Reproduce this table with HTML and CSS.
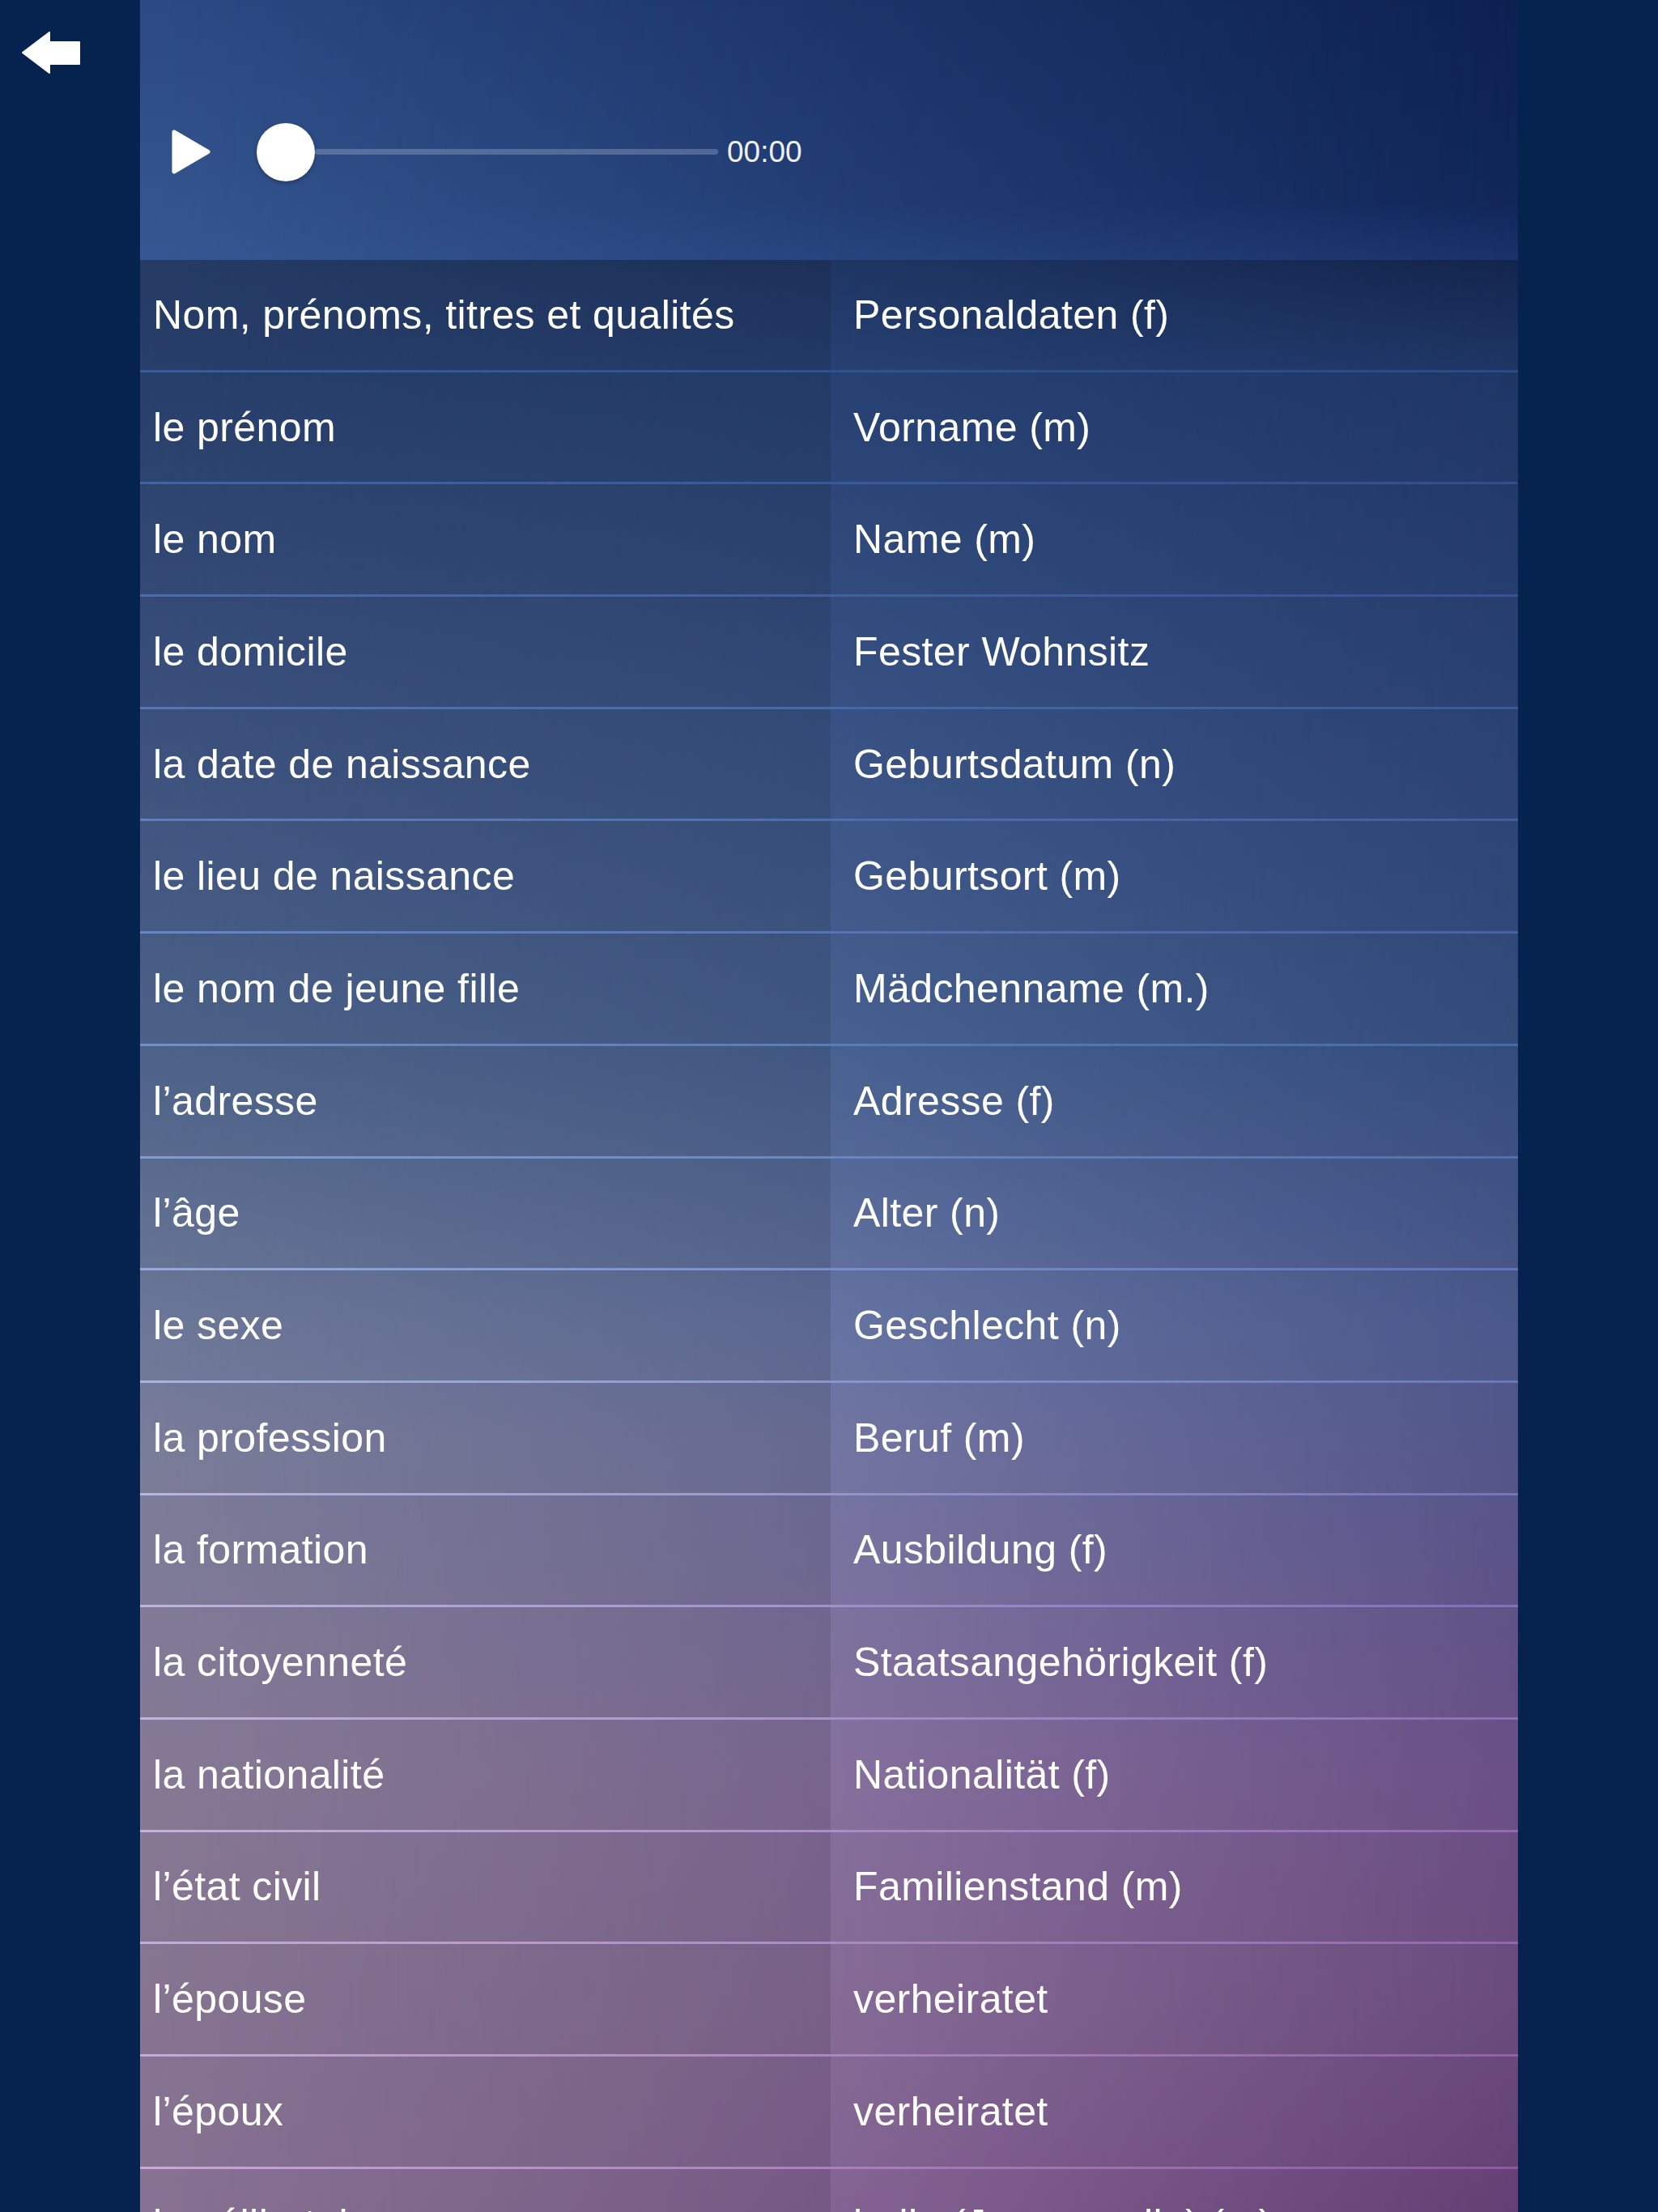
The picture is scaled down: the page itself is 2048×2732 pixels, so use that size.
FILE: index.html
```html
<!DOCTYPE html>
<html lang="fr">
<head>
<meta charset="utf-8">
<title>Vocabulaire</title>
<link rel="stylesheet" href="styles.css">
</head>
<body>
<div class="page">
  <aside class="gutter gutter-left">
    <button class="back" aria-label="Retour">
      <svg width="72" height="52" viewBox="0 0 72 52"><path d="M1 26 L34 1 L34 13 L71 13 L71 40 L34 40 L34 51 Z" fill="#fff" stroke="#fff" stroke-width="2" stroke-linejoin="round"/></svg>
    </button>
  </aside>
  <main class="panel">
    <div class="panel-content">
      <div class="player">
        <svg class="play" width="48" height="55" viewBox="0 0 48 55"><path d="M3 3 L45 27.5 L3 52 Z" fill="#fff" stroke="#fff" stroke-width="5" stroke-linejoin="round"/></svg>
        <div class="slider">
          <div class="knob"></div>
          <div class="track"></div>
        </div>
        <span class="time">00:00</span>
      </div>
      <div class="table">
        <div class="cell l">Nom, prénoms, titres et qualités</div><div class="cell r">Personaldaten (f)</div>
        <div class="cell l">le prénom</div><div class="cell r">Vorname (m)</div>
        <div class="cell l">le nom</div><div class="cell r">Name (m)</div>
        <div class="cell l">le domicile</div><div class="cell r">Fester Wohnsitz</div>
        <div class="cell l">la date de naissance</div><div class="cell r">Geburtsdatum (n)</div>
        <div class="cell l">le lieu de naissance</div><div class="cell r">Geburtsort (m)</div>
        <div class="cell l">le nom de jeune fille</div><div class="cell r">Mädchenname (m.)</div>
        <div class="cell l">l’adresse</div><div class="cell r">Adresse (f)</div>
        <div class="cell l">l’âge</div><div class="cell r">Alter (n)</div>
        <div class="cell l">le sexe</div><div class="cell r">Geschlecht (n)</div>
        <div class="cell l">la profession</div><div class="cell r">Beruf (m)</div>
        <div class="cell l">la formation</div><div class="cell r">Ausbildung (f)</div>
        <div class="cell l">la citoyenneté</div><div class="cell r">Staatsangehörigkeit (f)</div>
        <div class="cell l">la nationalité</div><div class="cell r">Nationalität (f)</div>
        <div class="cell l">l’état civil</div><div class="cell r">Familienstand (m)</div>
        <div class="cell l">l’épouse</div><div class="cell r">verheiratet</div>
        <div class="cell l">l’époux</div><div class="cell r">verheiratet</div>
        <div class="cell l">le célibataire</div><div class="cell r">ledig (Junggeselle) (m)</div>
      </div>
    </div>
  </main>
  <aside class="gutter gutter-right"></aside>
</div>
</body>
</html>
```

FILE: styles.css
```css
html, body {
  margin: 0;
  padding: 0;
}
body {
  background: #062350;
  font-family: "Liberation Sans", Arial, sans-serif;
  color: #fff;
  height: 2732px;
  overflow: hidden;
}
.page {
  display: flex;
  height: 2732px;
}
.gutter {
  width: 173px;
  flex: 0 0 173px;
  background: #062350;
}
.gutter-left {
  padding: 39px 0 0 27px;
  box-sizing: border-box;
}
.back {
  display: block;
  background: none;
  border: 0;
  padding: 0;
  margin: 0;
  width: 72px;
  height: 52px;
}
.back svg { display: block; }

.panel {
  flex: 0 0 1702px;
  width: 1702px;
  height: 2732px;
  overflow: hidden;
  position: relative;
  background: linear-gradient(to bottom,
    #2c4a84 0px, #34558f 250px, #3a5c9c 460px, #5878b8 900px,
    #7090c8 1290px, #a0b0e0 1640px, #b3b8e2 1780px, #c6b3db 2190px,
    #c6acd6 2470px, #c8a8d8 2732px);
}
.panel::before {
  content: "";
  position: absolute;
  inset: 0;
  background: linear-gradient(to bottom,
    #0c2150 0px, #112659 250px, #2a4a8a 460px, #3a5a9c 900px,
    #4668a8 1290px, #6578bd 1640px, #7a72ba 1900px, #916cb6 2190px,
    #9166aa 2470px, #88569f 2732px);
  -webkit-mask-image: linear-gradient(to right, transparent 0%, #000 100%);
  mask-image: linear-gradient(to right, transparent 0%, #000 100%);
}
.panel-content {
  position: relative;
}

.player {
  height: 321px;
  box-sizing: border-box;
  padding: 54px 0 0 39px;
  display: flex;
  align-items: center;
}
.play { display: block; flex: 0 0 auto; }
.slider {
  margin-left: 57px;
  display: flex;
  align-items: center;
}
.knob {
  width: 72px;
  height: 72px;
  border-radius: 50%;
  background: #fff;
  box-shadow: 0 2px 5px rgba(0, 0, 0, 0.3);
  flex: 0 0 auto;
}
.track {
  width: 498px;
  height: 7px;
  border-radius: 3px;
  background: rgba(190, 200, 220, 0.3);
}
.time {
  margin-left: 11px;
  font-size: 37px;
  color: #eef1f7;
  line-height: 1;
}

.table {
  display: grid;
  grid-template-columns: 853px 849px;
  grid-auto-rows: 135.7px;
  row-gap: 3px;
}
.cell {
  display: flex;
  align-items: center;
  font-size: 50px;
  letter-spacing: 0.4px;
  white-space: nowrap;
  color: #fff;
}
.cell.l {
  padding-left: 16px;
  background: linear-gradient(to right, rgba(0, 0, 0, 0.32), rgba(0, 0, 0, 0.30));
}
.cell.r {
  padding-left: 28px;
  background: linear-gradient(to right, rgba(0, 0, 0, 0.22), rgba(0, 0, 0, 0.27));
}
```
